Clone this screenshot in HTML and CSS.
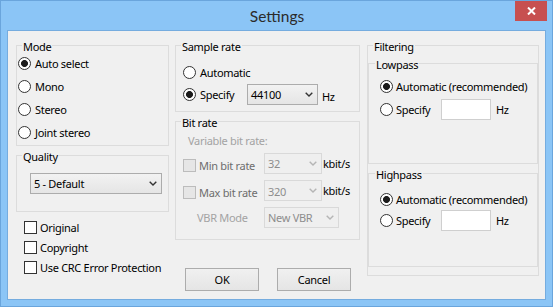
FILE: index.html
```html
<!DOCTYPE html>
<html>
<head>
<meta charset="utf-8">
<link rel="stylesheet" href="styles.css">
</head>
<body>
<div class="window">
  <div class="titlebar">
    <span class="title">Settings</span>
    <div class="close"><svg width="9" height="8" viewBox="0 0 9 8"><path d="M1 0.5 L8 7.5 M8 0.5 L1 7.5" stroke="#fff" stroke-width="2"/></svg></div>
  </div>
  <div class="client">
    <div class="col col-left">
      <fieldset class="group mode">
        <legend>Mode</legend>
        <div class="rows mode-rows">
          <label class="opt"><span class="rb on"></span>Auto select</label>
          <label class="opt"><span class="rb"></span>Mono</label>
          <label class="opt"><span class="rb"></span>Stereo</label>
          <label class="opt"><span class="rb"></span>Joint stereo</label>
        </div>
      </fieldset>
      <fieldset class="group quality">
        <legend>Quality</legend>
        <div class="combo quality-combo"><span>5 - Default</span><svg class="chev" width="8" height="5" viewBox="0 0 8 5"><path d="M0.7 0.7 L4 4 L7.3 0.7" fill="none" stroke="#333" stroke-width="1.4"/></svg></div>
      </fieldset>
      <div class="rows checks">
        <label class="opt chk"><span class="cb"></span>Original</label>
        <label class="opt chk"><span class="cb"></span>Copyright</label>
        <label class="opt chk"><span class="cb"></span>Use CRC Error Protection</label>
      </div>
    </div>

    <div class="col col-mid">
      <fieldset class="group sample">
        <legend>Sample rate</legend>
        <div class="sample-body">
          <label class="opt"><span class="rb"></span>Automatic</label>
          <div class="line spec-line">
            <label class="opt lab64"><span class="rb on"></span>Specify</label>
            <div class="combo sr-combo"><span>44100</span><svg class="chev" width="8" height="5" viewBox="0 0 8 5"><path d="M0.7 0.7 L4 4 L7.3 0.7" fill="none" stroke="#333" stroke-width="1.4"/></svg></div>
            <span class="unit hz">Hz</span>
          </div>
        </div>
      </fieldset>
      <fieldset class="group bitrate">
        <legend>Bit rate</legend>
        <div class="vbr-caption dim">Variable bit rate:</div>
        <div class="br-rows">
          <div class="line">
            <label class="opt lab81 grey"><span class="cb off"></span>Min bit rate</label>
            <div class="combo off w58"><span>32</span><svg class="chev" width="8" height="5" viewBox="0 0 8 5"><path d="M0.7 0.7 L4 4 L7.3 0.7" fill="none" stroke="#b5b5b5" stroke-width="1.4"/></svg></div>
            <span class="unit kb">kbit/s</span>
          </div>
          <div class="line">
            <label class="opt lab81 grey"><span class="cb off"></span>Max bit rate</label>
            <div class="combo off w58"><span class="lower">320</span><svg class="chev" width="8" height="5" viewBox="0 0 8 5"><path d="M0.7 0.7 L4 4 L7.3 0.7" fill="none" stroke="#b5b5b5" stroke-width="1.4"/></svg></div>
            <span class="unit kb">kbit/s</span>
          </div>
          <div class="line">
            <span class="lab81 dim vbr-label">VBR Mode</span>
            <div class="combo off w75"><span>New VBR</span><svg class="chev" width="8" height="5" viewBox="0 0 8 5"><path d="M0.7 0.7 L4 4 L7.3 0.7" fill="none" stroke="#b5b5b5" stroke-width="1.4"/></svg></div>
          </div>
        </div>
      </fieldset>
      <div class="buttons">
        <button class="btn">OK</button>
        <button class="btn">Cancel</button>
      </div>
    </div>

    <div class="col col-right">
      <fieldset class="group filtering">
        <legend>Filtering</legend>
        <fieldset class="group inner lowpass">
          <legend>Lowpass</legend>
          <div class="filt-body">
            <label class="opt gap3"><span class="rb on"></span>Automatic (recommended)</label>
            <div class="line lp-spec">
              <label class="opt gap3 lab61"><span class="rb"></span>Specify</label>
              <div class="edit"></div>
              <span class="unit hz2">Hz</span>
            </div>
          </div>
        </fieldset>
        <fieldset class="group inner highpass">
          <legend>Highpass</legend>
          <div class="filt-body hp-body">
            <label class="opt gap3"><span class="rb on"></span>Automatic (recommended)</label>
            <div class="line hp-spec">
              <label class="opt gap3 lab61"><span class="rb"></span>Specify</label>
              <div class="edit"></div>
              <span class="unit hz2">Hz</span>
            </div>
          </div>
        </fieldset>
      </fieldset>
    </div>
  </div>
</div>
</body>
</html>
```

FILE: styles.css
```css
* { box-sizing: border-box; }

body {
  margin: 0;
  font-family: "Noto Sans", "DejaVu Sans", sans-serif;
  font-size: 11px;
  letter-spacing: -0.3px;
  color: #000;
  background: #fff;
}

.window {
  width: 553px;
  height: 307px;
  background: #8bc5f6;
  border: 1px solid #6aa5dc;
  display: flex;
  flex-direction: column;
}

.titlebar {
  position: relative;
  height: 29px;
  display: flex;
  align-items: center;
  justify-content: center;
}

.title {
  font-family: Lato, "Noto Sans", sans-serif;
  font-size: 15.5px;
  letter-spacing: 0;
  color: #2b2b2b;
  padding-left: 1px;
}

.close {
  position: absolute;
  right: 5px;
  top: 0;
  width: 32px;
  height: 20px;
  background: #c75050;
  display: flex;
  align-items: center;
  justify-content: center;
}

.client {
  margin-left: 6px;
  width: 539px;
  height: 270px;
  border: 1px solid #75acdf;
  background: #f0f0f0;
  display: flex;
  align-items: flex-start;
  padding: 5px 0 0 8px;
}

.col-left { width: 153px; }
.col-mid { width: 185px; margin-left: 6px; }
.col-right { width: 172px; margin-left: 7px; }

fieldset.group {
  margin: 0;
  padding: 0;
  border: 1px solid #dcdcdc;
  min-width: 0;
}

legend {
  padding: 4px 1px 0;
  margin-left: 5px;
  line-height: 14px;
}

.inner legend { margin-left: 6px; }

.rows {
  display: flex;
  flex-direction: column;
  gap: 7px;
}

.opt {
  display: flex;
  align-items: center;
  height: 16px;
  white-space: nowrap;
}

.rb {
  width: 13px;
  height: 13px;
  border: 1px solid #333;
  border-radius: 50%;
  background: #fff;
  margin-right: 4px;
  flex: none;
}

.rb.on {
  background: radial-gradient(circle, #1b1b1b 0 3.1px, #fff 3.8px);
}

.gap3 .rb { margin-right: 3px; }

.cb {
  width: 13px;
  height: 13px;
  border: 1px solid #333;
  background: #fff;
  margin-right: 3px;
  flex: none;
}

.cb.off {
  border-color: #bcbcbc;
  background: #e6e6e6;
}

/* Mode */
.mode { height: 110px; }
.mode-rows { padding: 1px 0 0 1px; }

/* Quality */
.quality { height: 66px; margin-top: 3px; }

.combo {
  height: 21px;
  border: 1px solid #acacac;
  background: linear-gradient(#f2f2f2, #e5e5e5);
  display: flex;
  align-items: center;
  justify-content: space-between;
  padding: 0 4px 0 3px;
  flex: none;
  white-space: nowrap;
}

.combo.off {
  border-color: #d9d9d9;
  background: #efefef;
  color: #8d8d8d;
}

.quality-combo { margin: 9px 6px 0 13px; }

.checks {
  margin-top: 7px;
  padding-left: 8px;
  gap: 4px;
}

/* Sample rate */
.sample { height: 76px; }
.sample-body { padding: 10px 0 0 7px; }

.line {
  display: flex;
  align-items: center;
  height: 21px;
}

.spec-line { margin-top: 4px; }
.lab64 { width: 64px; flex: none; }
.lab81 { width: 81px; flex: none; }
.lab61 { width: 61px; flex: none; }

.sr-combo { width: 71px; }
.hz { margin-left: 4px; padding-top: 4px; }

/* Bit rate */
.bitrate { height: 128px; margin-top: 3px; }

.vbr-caption {
  margin-top: 4px;
  padding-left: 12px;
  line-height: 14px;
}

.dim { color: #a3a3a3; }
.grey { color: #6d6d6d; }

.br-rows {
  margin-top: 5px;
  padding-left: 7px;
  display: flex;
  flex-direction: column;
  gap: 6px;
}

.br-rows .opt { padding-top: 3px; height: 19px; }

.w58 { width: 58px; }
.w75 { width: 75px; }
.lower { padding-top: 2px; }

.kb { margin-left: 1px; padding-bottom: 1px; }

.vbr-label { padding-left: 14px; }

.buttons {
  margin-top: 28px;
  display: flex;
  justify-content: center;
  gap: 18px;
  padding-left: 1px;
}

.btn {
  width: 74px;
  height: 23px;
  border: 1px solid #acacac;
  background: linear-gradient(#f0f0f0, #e5e5e5);
  font: inherit;
  letter-spacing: inherit;
  color: #000;
  padding: 0;
  margin: 0;
}

/* Filtering */
.filtering { height: 240px; }

.lowpass {
  margin: -4px 2px 0 1px;
  height: 110px;
}

.highpass {
  margin: 2px 2px 0 1px;
  height: 103px;
}

.filt-body { padding: 6px 0 0 11px; }
.hp-body { padding-top: 9px; }

.lp-spec { margin-top: 5px; }
.hp-spec { margin-top: 3px; }

.edit {
  width: 50px;
  height: 21px;
  border: 1px solid #cfcfcf;
  background: #fff;
  flex: none;
}

.hz2 { margin-left: 5px; }
```
